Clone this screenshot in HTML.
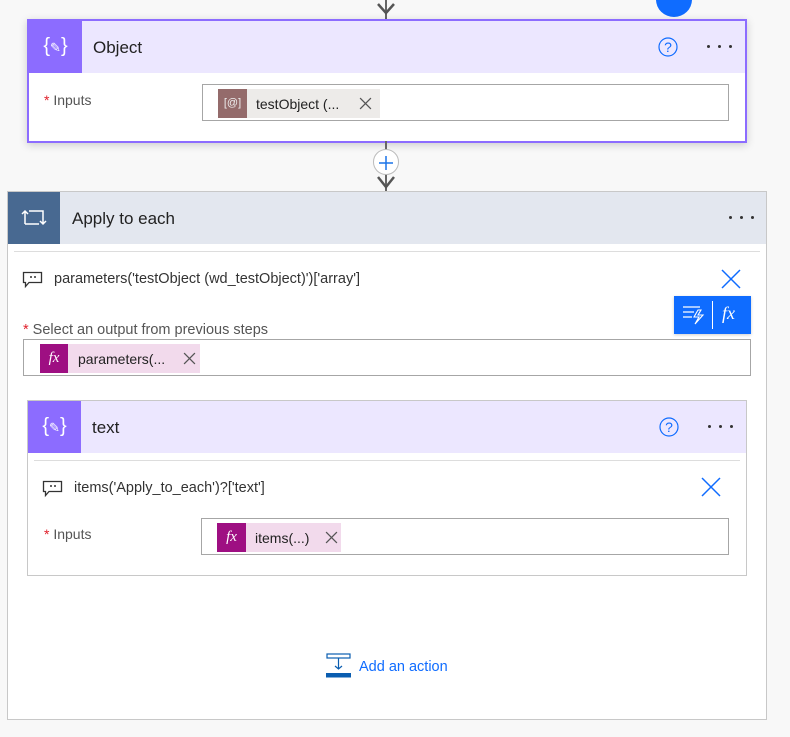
<!DOCTYPE html><html><head><style>
body{margin:0;width:790px;height:737px;background:#f8f8f8;font-family:"Liberation Sans",sans-serif;position:relative;overflow:hidden;color:#222}
.a{position:absolute}
.t{font-size:14px;color:#333}
.lab{font-size:14px;color:#555}
.star{color:#e0202b}
.box{background:#fff;border:1px solid #a6a6a6}
.chip{display:flex;align-items:center;font-size:14px;color:#222}
.d{position:absolute;width:3px;height:3px;border-radius:50%;background:#333}
</style></head><body>
<svg width="0" height="0" style="position:absolute"><defs><symbol id="x" viewBox="0 0 12 12"><path d="M1 1 L11 11 M11 1 L1 11" stroke="#555" stroke-width="1.2"/></symbol></defs></svg>
<!-- top connector -->
<div class="a" style="left:385px;top:0;width:2px;height:19px;background:#666"></div>
<svg class="a" style="left:376px;top:0" width="20" height="18"><path d="M2 4 L10 13 L18 4" stroke="#555" stroke-width="2.5" fill="none"/></svg>
<div class="a" style="left:656px;top:-18px;width:36px;height:35px;border-radius:50%;background:#0f6cff"></div>

<!-- Object card -->
<div class="a" style="left:27px;top:19px;width:716px;height:120px;background:#fff;border:2px solid #8c6cff;box-shadow:0 2px 8px rgba(0,0,0,.18)"></div>
<div class="a" style="left:29px;top:21px;width:716px;height:52px;background:#ece7ff"></div>
<div class="a" style="left:29px;top:21px;width:53px;height:52px;background:#8c6cff;color:#fff;font-size:20px;text-align:center;line-height:50px">{<span style="font-size:13px">✎</span>}</div>
<div class="a" style="left:93px;top:38px;font-size:17px">Object</div>
<svg class="a" style="left:657px;top:36px" width="22" height="22"><circle cx="11" cy="11" r="9" stroke="#0f6cff" fill="none" stroke-width="1.2"/><text x="11" y="16" font-size="14" text-anchor="middle" fill="#0f6cff" font-family="Liberation Sans">?</text></svg>
<div class="d" style="left:707px;top:45px"></div><div class="d" style="left:718px;top:45px"></div><div class="d" style="left:729px;top:45px"></div>
<div class="a lab" style="left:44px;top:92px"><span class="star">*</span> Inputs</div>
<div class="a box" style="left:202px;top:84px;width:525px;height:35px"></div>
<div class="a chip" style="left:218px;top:89px;width:162px;height:29px;background:#edebe9">
<div style="width:29px;height:29px;background:#946b6b;color:#eee;font-size:11px;text-align:center;line-height:29px">[@]</div>
<span style="margin-left:9px">testObject (...</span><svg style="margin-left:20px" width="13" height="13"><use href="#x"/></svg></div>

<!-- middle connector -->
<div class="a" style="left:385px;top:141px;width:2px;height:50px;background:#666"></div>
<div class="a" style="left:373px;top:149px;width:24px;height:24px;border-radius:50%;background:#fff;border:1.5px solid #bbb"></div>
<svg class="a" style="left:376px;top:153px" width="20" height="20"><path d="M10 3 V17 M3 10 H17" stroke="#1a73e8" stroke-width="1.5"/></svg>
<svg class="a" style="left:376px;top:175px" width="20" height="16"><path d="M2 2 L10 12 L18 2" stroke="#555" stroke-width="2.5" fill="none"/></svg>

<!-- Apply to each -->
<div class="a" style="left:7px;top:191px;width:758px;height:527px;background:#fff;border:1px solid #c8c8c8"></div>
<div class="a" style="left:8px;top:192px;width:758px;height:52px;background:#e3e7ef"></div>
<div class="a" style="left:8px;top:192px;width:52px;height:52px;background:#486991"></div>
<svg class="a" style="left:20px;top:206px" width="28" height="24"><path d="M5 18 V5 M2 8 L5 5 L8 8 M5 18 H19 M9 5 H23 V18 M20 15 L23 18 L26 15" stroke="#fff" stroke-width="1.5" fill="none"/></svg>
<div class="a" style="left:72px;top:209px;font-size:17px">Apply to each</div>
<div class="d" style="left:729px;top:216px"></div><div class="d" style="left:740px;top:216px"></div><div class="d" style="left:751px;top:216px"></div>
<div class="a" style="left:14px;top:251px;width:746px;height:1px;background:#ddd"></div>
<svg class="a" style="left:22px;top:271px" width="22" height="18"><path d="M1.5 1.5 H19.5 V11.5 H7 L3.5 15.5 V11.5 H1.5 Z" stroke="#333" stroke-width="1.3" fill="none"/><circle cx="9" cy="6" r="1" fill="#333"/><circle cx="13" cy="6" r="1" fill="#333"/></svg>
<div class="a t" style="left:54px;top:271px;font-size:14.5px">parameters('testObject (wd_testObject)')['array']</div>
<svg class="a" style="left:720px;top:268px" width="22" height="22"><path d="M2 2 L20 20 M20 2 L2 20" stroke="#0f6cff" stroke-width="1.5"/></svg>
<div class="a" style="left:674px;top:296px;width:77px;height:38px;background:#0f6cff;box-shadow:0 1px 3px rgba(0,0,0,.2)"></div>
<svg class="a" style="left:682px;top:304px" width="24" height="22"><path d="M1 3 H18 M1 8 H12 M1 13 H10" stroke="#fff" stroke-width="1.3"/><path d="M16 6 L12 13 H17 L13 20 L21 11 H16 L19 6 Z" stroke="#fff" stroke-width="1.1" fill="none"/></svg>
<div class="a" style="left:712px;top:301px;width:1px;height:28px;background:#fff"></div>
<div class="a" style="left:722px;top:303px;color:#fff;font-family:'Liberation Serif',serif;font-style:italic;font-size:18px">fx</div>
<div class="a lab" style="left:23px;top:322px;font-size:14.5px"><span class="star">*</span> Select an output from previous steps</div>
<div class="a box" style="left:23px;top:339px;width:726px;height:35px"></div>
<div class="a chip" style="left:40px;top:344px;width:160px;height:29px;background:#f2daec">
<div style="width:28px;height:29px;background:#9e0f82;color:#fff;font-family:'Liberation Serif',serif;font-style:italic;font-size:15px;text-align:center;line-height:29px">fx</div>
<span style="margin-left:10px">parameters(...</span><svg style="margin-left:18px" width="13" height="13"><use href="#x"/></svg></div>

<!-- text card -->
<div class="a" style="left:27px;top:400px;width:718px;height:174px;background:#fff;border:1px solid #c8c8c8"></div>
<div class="a" style="left:28px;top:401px;width:718px;height:52px;background:#ece7ff"></div>
<div class="a" style="left:28px;top:401px;width:53px;height:52px;background:#8c6cff;color:#fff;font-size:20px;text-align:center;line-height:50px">{<span style="font-size:13px">✎</span>}</div>
<div class="a" style="left:92px;top:418px;font-size:17px">text</div>
<svg class="a" style="left:658px;top:416px" width="22" height="22"><circle cx="11" cy="11" r="9" stroke="#0f6cff" fill="none" stroke-width="1.2"/><text x="11" y="16" font-size="14" text-anchor="middle" fill="#0f6cff" font-family="Liberation Sans">?</text></svg>
<div class="d" style="left:708px;top:425px"></div><div class="d" style="left:719px;top:425px"></div><div class="d" style="left:730px;top:425px"></div>
<div class="a" style="left:34px;top:460px;width:706px;height:1px;background:#ddd"></div>
<svg class="a" style="left:42px;top:480px" width="22" height="18"><path d="M1.5 1.5 H19.5 V11.5 H7 L3.5 15.5 V11.5 H1.5 Z" stroke="#333" stroke-width="1.3" fill="none"/><circle cx="9" cy="6" r="1" fill="#333"/><circle cx="13" cy="6" r="1" fill="#333"/></svg>
<div class="a t" style="left:74px;top:480px;font-size:14.5px">items('Apply_to_each')?['text']</div>
<svg class="a" style="left:700px;top:476px" width="22" height="22"><path d="M2 2 L20 20 M20 2 L2 20" stroke="#0f6cff" stroke-width="1.5"/></svg>
<div class="a lab" style="left:44px;top:526px"><span class="star">*</span> Inputs</div>
<div class="a box" style="left:201px;top:518px;width:526px;height:35px"></div>
<div class="a chip" style="left:217px;top:523px;width:124px;height:29px;background:#f2daec">
<div style="width:29px;height:29px;background:#9e0f82;color:#fff;font-family:'Liberation Serif',serif;font-style:italic;font-size:15px;text-align:center;line-height:29px">fx</div>
<span style="margin-left:9px">items(...)</span><svg style="margin-left:16px" width="13" height="13"><use href="#x"/></svg></div>

<!-- add action -->
<svg class="a" style="left:326px;top:653px" width="26" height="26"><rect x="1" y="1" width="23" height="4" stroke="#0a5db0" stroke-width="1.2" fill="none"/><path d="M12.5 5 V16 M9 13 L12.5 16 L16 13" stroke="#0a5db0" stroke-width="1.2" fill="none"/><rect x="0" y="20" width="25" height="4.5" fill="#0a5db0"/></svg>
<div class="a" style="left:359px;top:659px;font-size:14.5px;color:#0f6cff">Add an action</div>
</body></html>
